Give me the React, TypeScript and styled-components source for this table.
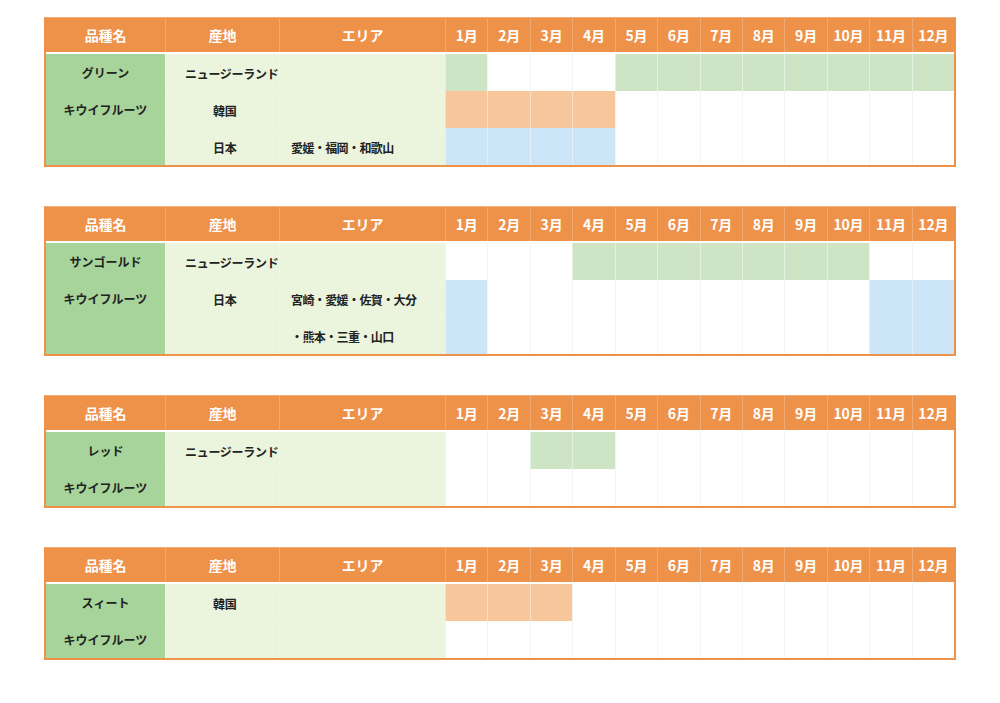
import React from "react";
import styled, { createGlobalStyle } from "styled-components";

type Tone = "g" | "o" | "b" | null;

type Row = {
  origin?: string;
  indent?: boolean;
  area?: string;
  months: Tone[];
};

type Variety = {
  name: string[];
  rows: Row[];
};

const MONTHS = ["1月", "2月", "3月", "4月", "5月", "6月", "7月", "8月", "9月", "10月", "11月", "12月"];

// build a 12-slot row from a list of [tone, from, to] ranges (1-based, inclusive)
const span = (...ranges: [Tone, number, number][]): Tone[] => {
  const out: Tone[] = Array(12).fill(null);
  ranges.forEach(([t, a, b]) => {
    for (let i = a; i <= b; i++) out[i - 1] = t;
  });
  return out;
};

const data: Variety[] = [
  {
    name: ["グリーン", "キウイフルーツ"],
    rows: [
      { origin: "ニュージーランド", months: span(["g", 1, 1], ["g", 5, 12]) },
      { origin: "韓国", indent: true, months: span(["o", 1, 4]) },
      { origin: "日本", indent: true, area: "愛媛・福岡・和歌山", months: span(["b", 1, 4]) },
    ],
  },
  {
    name: ["サンゴールド", "キウイフルーツ"],
    rows: [
      { origin: "ニュージーランド", months: span(["g", 4, 10]) },
      { origin: "日本", indent: true, area: "宮崎・愛媛・佐賀・大分", months: span(["b", 1, 1], ["b", 11, 12]) },
      { area: "・熊本・三重・山口", months: span(["b", 1, 1], ["b", 11, 12]) },
    ],
  },
  {
    name: ["レッド", "キウイフルーツ"],
    rows: [
      { origin: "ニュージーランド", months: span(["g", 3, 4]) },
      { months: span() },
    ],
  },
  {
    name: ["スィート", "キウイフルーツ"],
    rows: [
      { origin: "韓国", indent: true, months: span(["o", 1, 3]) },
      { months: span() },
    ],
  },
];

const toneColor: Record<string, string> = {
  g: "#cde5c4",
  o: "#f7c79b",
  b: "#cce6f8",
};

const GlobalStyle = createGlobalStyle`
  body {
    margin: 0;
    background: #ffffff;
    font-family: "Noto Sans CJK JP", "Noto Sans", sans-serif;
  }
`;

const Page = styled.div`
  display: flex;
  flex-direction: column;
  gap: 39px;
  padding: 17px 0 0 44px;
`;

const Table = styled.div`
  width: 908px;
  border: 2px solid #ee9249;
  border-top: 1px solid #f3b07c;
  background: #ffffff;
`;

const COLS = "119px 114px 166px repeat(12, 1fr)";

const HeadRow = styled.div`
  display: grid;
  grid-template-columns: ${COLS};
  height: 34px;
  background: #ee9249;
  margin-bottom: 2px;
`;

const HeadCell = styled.div`
  display: flex;
  align-items: center;
  justify-content: center;
  color: #ffffff;
  font-size: 14px;
  font-weight: 700;
  letter-spacing: -0.2px;
  border-left: 1px solid rgba(255, 255, 255, 0.22);
  &:first-child {
    border-left: none;
  }
`;

const Body = styled.div<{ $rows: number }>`
  display: grid;
  grid-template-columns: ${COLS};
  grid-template-rows: repeat(${(p) => p.$rows}, 37px);
`;

const NameCell = styled.div`
  background: #a6d49a;
  display: flex;
  flex-direction: column;
`;

const NameLine = styled.div`
  height: 37px;
  display: flex;
  align-items: center;
  justify-content: center;
  font-size: 12px;
  font-weight: 700;
  color: #222222;
`;

const TextCell = styled.div<{ $pad: number; $tight?: boolean }>`
  background: #ebf4dc;
  display: flex;
  align-items: center;
  padding-left: ${(p) => p.$pad}px;
  font-size: 12px;
  font-weight: 700;
  color: #222222;
  white-space: nowrap;
  letter-spacing: ${(p) => (p.$tight ? "-0.6px" : "-0.3px")};
  border-left: 1px solid rgba(255, 255, 255, 0.25);
  border-top: 1px solid rgba(255, 255, 255, 0.2);
`;

const MonthCell = styled.div<{ $tone: Tone }>`
  background: ${(p) => (p.$tone ? toneColor[p.$tone] : "#ffffff")};
  border-left: 1px solid
    ${(p) => (p.$tone ? "rgba(255, 255, 255, 0.45)" : "#f4f4f4")};
`;

function VarietyTable({ v }: { v: Variety }) {
  const n = v.rows.length;
  return (
    <Table>
      <HeadRow>
        <HeadCell>品種名</HeadCell>
        <HeadCell>産地</HeadCell>
        <HeadCell>エリア</HeadCell>
        {MONTHS.map((m) => (
          <HeadCell key={m}>{m}</HeadCell>
        ))}
      </HeadRow>
      <Body $rows={n}>
        <NameCell style={{ gridRow: `1 / span ${n}`, gridColumn: 1 }}>
          {v.name.map((t) => (
            <NameLine key={t}>{t}</NameLine>
          ))}
        </NameCell>
        {v.rows.map((r, ri) => (
          <React.Fragment key={ri}>
            <TextCell $pad={r.indent ? 47 : 19} style={{ gridRow: ri + 1, gridColumn: 2 }}>
              {r.origin}
            </TextCell>
            <TextCell $pad={11} $tight style={{ gridRow: ri + 1, gridColumn: 3 }}>
              {r.area}
            </TextCell>
            {r.months.map((t, mi) => (
              <MonthCell key={mi} $tone={t} style={{ gridRow: ri + 1, gridColumn: mi + 4 }} />
            ))}
          </React.Fragment>
        ))}
      </Body>
    </Table>
  );
}

export default function App() {
  return (
    <>
      <GlobalStyle />
      <Page>
        {data.map((v) => (
          <VarietyTable key={v.name[0]} v={v} />
        ))}
      </Page>
    </>
  );
}
